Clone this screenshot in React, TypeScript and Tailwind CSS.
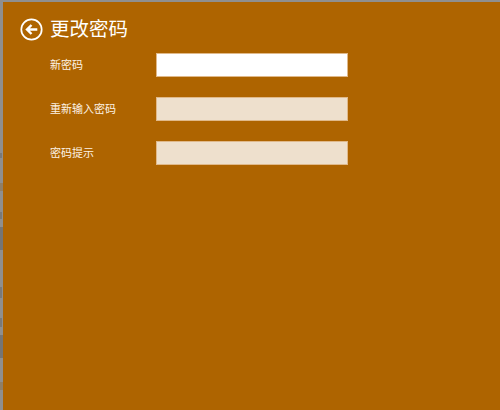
const fields = [
  { label: '新密码', active: true },
  { label: '重新输入密码', active: false },
  { label: '密码提示', active: false },
];

const App = () => {
  return (
    <div className="flex flex-col w-[500px] h-[410px] overflow-hidden bg-[#8f8f8f] font-['Noto_Sans_CJK_SC',sans-serif]">
      <div className="h-[2px] shrink-0 bg-[#8f8f8f]" />
      <div className="flex flex-1">
        {/* window behind, only a sliver of it shows */}
        <div className="flex flex-col w-[3px] shrink-0">
          <div className="h-[151px]" />
          <div className="h-[5px] w-[2px] bg-[#7a7a7a]" />
          <div className="h-[25px]" />
          <div className="h-[8px] bg-[#8f7f68]" />
          <div className="h-[21px]" />
          <div className="h-[7px] w-[2px] bg-[#7a7a7a]" />
          <div className="h-[8px]" />
          <div className="h-[23px] bg-[#757575]" />
          <div className="h-[37px]" />
          <div className="h-[11px] w-[2px] bg-[#7a7a7a]" />
          <div className="h-[20px]" />
          <div className="h-[9px] w-[2px] bg-[#7a7a7a]" />
          <div className="h-[8px]" />
          <div className="h-[23px] bg-[#757575]" />
          <div className="h-[24px]" />
          <div className="h-[8px] bg-[#8f7f68]" />
        </div>
        <main className="flex-1 bg-[#ae6400] pl-[17px] pt-[14px]">
          <div className="flex items-center h-[26px]">
            <svg width="23" height="23" viewBox="0 0 23 23" fill="none" stroke="white">
              <circle cx="11.5" cy="11.5" r="10.2" strokeWidth="1.7" />
              <path d="M17.3 11.5H7.5M11.5 7L7 11.5L11.5 16" strokeWidth="2.4" />
            </svg>
            <h1 className="ml-[7px] pb-[2px] text-[19.5px] leading-[26px] text-white">更改密码</h1>
          </div>
          <div className="flex flex-col gap-5 mt-[11px] ml-[30px]">
            {fields.map((field) => (
              <div key={field.label} className="flex items-center h-6">
                <label className="w-[106px] pb-[2px] text-[11px] text-[#fdf3e6]">{field.label}</label>
                <input
                  type="text"
                  className={`w-[192px] h-6 border border-[#e0b98a] outline-none ${field.active ? 'bg-white' : 'bg-[#eee0cd]'}`}
                />
              </div>
            ))}
          </div>
        </main>
      </div>
    </div>
  );
};

export default App;
